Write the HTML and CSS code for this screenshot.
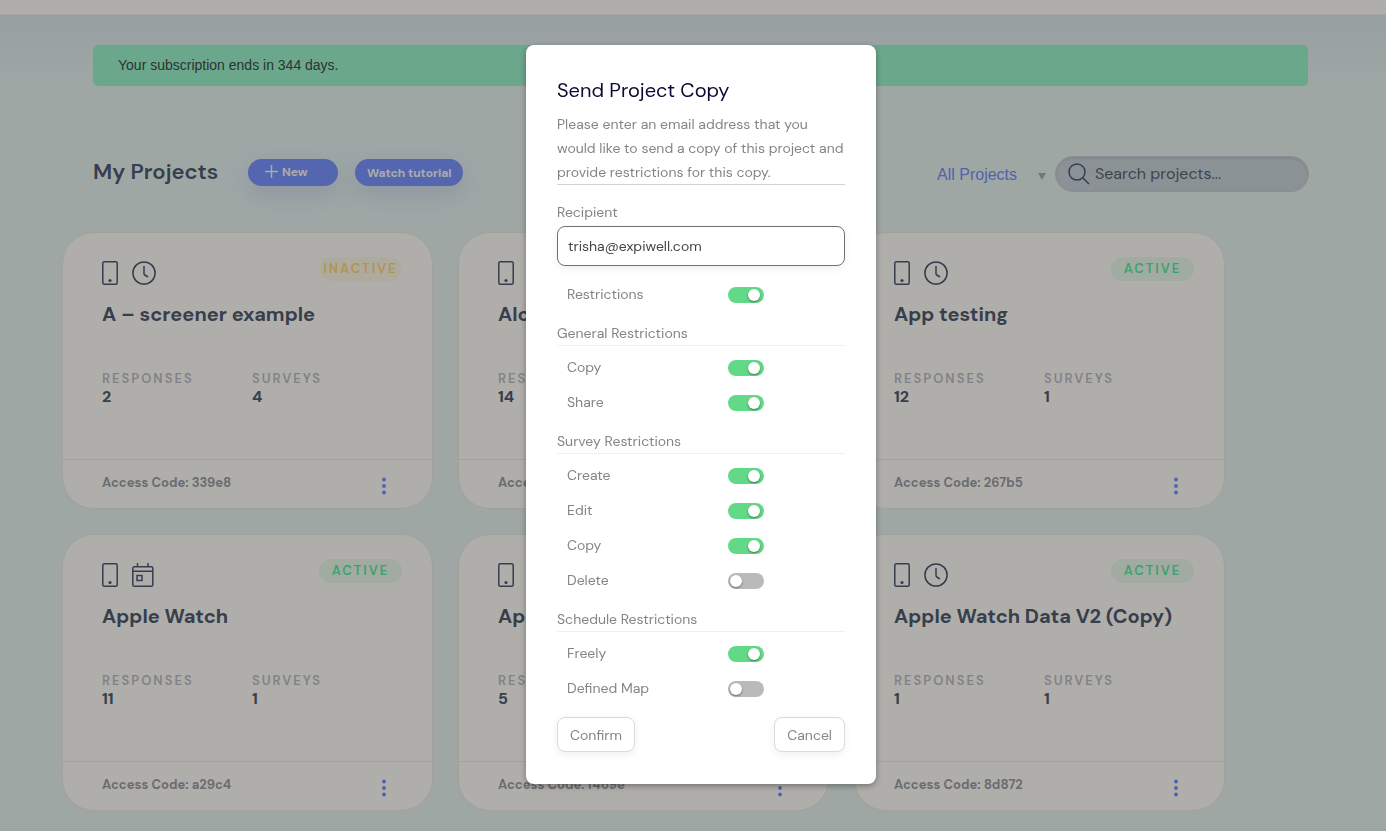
FILE: index.html
```html
<!DOCTYPE html>
<html lang="en">
<head>
<meta charset="utf-8">
<meta name="viewport" content="width=device-width, initial-scale=1">
<title>My Projects</title>
<link rel="stylesheet" href="styles.css">
</head>
<body>
<svg class="sprite" aria-hidden="true">
  <symbol id="phone" viewBox="0 0 16 24"><rect x="0.8" y="0.8" width="14.4" height="22.4" rx="1.5"/><circle class="dot" cx="8" cy="19.5" r="1.6"/></symbol>
  <symbol id="clock" viewBox="0 0 24 24"><circle cx="12" cy="12" r="11.1"/><path d="M12 5v7.5q0 1 .8 1.5l3.2 2"/></symbol>
  <symbol id="calendar" viewBox="0 0 22 24"><rect x="0.8" y="3.8" width="20" height="19.4" rx="1.5"/><path d="M1 8.3h20M5.5 0v4M16 0v4"/><rect x="5" y="12.5" width="5" height="5"/></symbol>
  <symbol id="dots" viewBox="0 0 4 18"><circle cx="2" cy="2.5" r="1.9"/><circle cx="2" cy="9" r="1.9"/><circle cx="2" cy="15.5" r="1.9"/></symbol>
</svg>
<div class="topbar"></div>
<main class="page">
  <p class="notice">Your subscription ends in 344 days.</p>
  <header class="toolbar">
    <h1>My Projects</h1>
    <button class="pill pill-new" type="button"><svg width="13" height="13" viewBox="0 0 13 13" aria-hidden="true"><path d="M6.5 0v13M0 6.5h13"/></svg>New</button>
    <button class="pill" type="button">Watch tutorial</button>
    <div class="filter">
      <select aria-label="Project filter"><option>All Projects</option></select>
      <svg width="8" height="7" viewBox="0 0 8 7" aria-hidden="true"><path d="M0 0h8L4 7z"/></svg>
    </div>
    <label class="search">
      <svg width="22" height="22" viewBox="0 0 22 22" aria-hidden="true"><circle cx="9" cy="9" r="8"/><path d="M15 15l6 6"/></svg>
      <input type="text" placeholder="Search projects..." aria-label="Search projects">
    </label>
  </header>
  <section class="cards">
    <article class="card">
      <div class="card-body">
        <div class="card-top"><svg class="icon" width="16" height="24"><use href="#phone"/></svg><svg class="icon" width="24" height="24"><use href="#clock"/></svg><span class="badge inactive">INACTIVE</span></div>
        <h2>A – screener example</h2>
        <dl><div><dt>RESPONSES</dt><dd>2</dd></div><div><dt>SURVEYS</dt><dd>4</dd></div></dl>
      </div>
      <footer><span>Access Code: 339e8</span><button type="button" aria-label="Project menu"><svg width="4" height="18"><use href="#dots"/></svg></button></footer>
    </article>
    <article class="card">
      <div class="card-body">
        <div class="card-top"><svg class="icon" width="16" height="24"><use href="#phone"/></svg></div>
        <h2>Alc</h2>
        <dl><div><dt>RESPONSES</dt><dd>14</dd></div></dl>
      </div>
      <footer><span>Access</span></footer>
    </article>
    <article class="card">
      <div class="card-body">
        <div class="card-top"><svg class="icon" width="16" height="24"><use href="#phone"/></svg><svg class="icon" width="24" height="24"><use href="#clock"/></svg><span class="badge">ACTIVE</span></div>
        <h2>App testing</h2>
        <dl><div><dt>RESPONSES</dt><dd>12</dd></div><div><dt>SURVEYS</dt><dd>1</dd></div></dl>
      </div>
      <footer><span>Access Code: 267b5</span><button type="button" aria-label="Project menu"><svg width="4" height="18"><use href="#dots"/></svg></button></footer>
    </article>
    <article class="card">
      <div class="card-body">
        <div class="card-top"><svg class="icon" width="16" height="24"><use href="#phone"/></svg><svg class="icon" width="22" height="24"><use href="#calendar"/></svg><span class="badge">ACTIVE</span></div>
        <h2>Apple Watch</h2>
        <dl><div><dt>RESPONSES</dt><dd>11</dd></div><div><dt>SURVEYS</dt><dd>1</dd></div></dl>
      </div>
      <footer><span>Access Code: a29c4</span><button type="button" aria-label="Project menu"><svg width="4" height="18"><use href="#dots"/></svg></button></footer>
    </article>
    <article class="card">
      <div class="card-body">
        <div class="card-top"><svg class="icon" width="16" height="24"><use href="#phone"/></svg></div>
        <h2>Ap</h2>
        <dl><div><dt>RESPONSES</dt><dd>5</dd></div></dl>
      </div>
      <footer><span>Access Code: f469e</span><button type="button" aria-label="Project menu"><svg width="4" height="18"><use href="#dots"/></svg></button></footer>
    </article>
    <article class="card">
      <div class="card-body">
        <div class="card-top"><svg class="icon" width="16" height="24"><use href="#phone"/></svg><svg class="icon" width="24" height="24"><use href="#clock"/></svg><span class="badge">ACTIVE</span></div>
        <h2>Apple Watch Data V2 (Copy)</h2>
        <dl><div><dt>RESPONSES</dt><dd>1</dd></div><div><dt>SURVEYS</dt><dd>1</dd></div></dl>
      </div>
      <footer><span>Access Code: 8d872</span><button type="button" aria-label="Project menu"><svg width="4" height="18"><use href="#dots"/></svg></button></footer>
    </article>
  </section>
</main>
<div class="overlay">
  <form class="modal" role="dialog" aria-labelledby="modal-title">
    <h2 id="modal-title">Send Project Copy</h2>
    <p>Please enter an email address that you would like to send a copy of this project and provide restrictions for this copy.</p>
    <label class="field-label" for="recipient">Recipient</label>
    <input class="field" id="recipient" type="email" value="trisha@expiwell.com">
    <label class="option"><span>Restrictions</span><input type="checkbox" checked></label>
    <h3>General Restrictions</h3>
    <label class="option"><span>Copy</span><input type="checkbox" checked></label>
    <label class="option"><span>Share</span><input type="checkbox" checked></label>
    <h3>Survey Restrictions</h3>
    <label class="option"><span>Create</span><input type="checkbox" checked></label>
    <label class="option"><span>Edit</span><input type="checkbox" checked></label>
    <label class="option"><span>Copy</span><input type="checkbox" checked></label>
    <label class="option"><span>Delete</span><input type="checkbox"></label>
    <h3>Schedule Restrictions</h3>
    <label class="option"><span>Freely</span><input type="checkbox" checked></label>
    <label class="option"><span>Defined Map</span><input type="checkbox"></label>
    <div class="actions"><button type="button">Confirm</button><button type="button">Cancel</button></div>
  </form>
</div>
</body>
</html>
```
FILE: styles.css
```css
* { box-sizing: border-box; }
html { height: 100%; }
body {
  height: 100%;
  margin: 0;
  overflow: hidden;
  background: #e4f0ed;
  color: #4f5a6d;
  font-family: "DM Sans", Inter, "Liberation Sans", sans-serif;
  font-optical-sizing: none;
}
h1, h2, h3, p, dl, dd { margin: 0; }
button, input { font-family: inherit; font-optical-sizing: none; }
button { cursor: pointer; }
.sprite { display: none; }

.topbar { height: 15px; background: #fdfaf4; border-bottom: 1px solid #f0efec; }
.page {
  padding: 30px 0 24px;
  background: linear-gradient(#d9e4e6, #e4f0ed 70px);
}
.notice {
  margin: 0 78px 0 93px;
  padding: 0 25px;
  border-radius: 5px;
  background: #9af0c8;
  color: #40494b;
  font: 14px/41px "Liberation Sans", Arial, sans-serif;
}

.toolbar {
  display: flex;
  align-items: center;
  margin: 69px 77px 40px 93px;
  height: 37px;
}
h1 { width: 155px; padding-bottom: 4px; font-size: 22px; line-height: 28px; font-weight: 600; white-space: nowrap; font-optical-sizing: auto; }
.pill {
  height: 27px;
  padding: 0 12px;
  margin: 0 17px 2px 0;
  border: 0;
  border-radius: 14px;
  background: #7993fd;
  box-shadow: 0 8px 24px rgba(121, 130, 220, 0.25);
  color: #f6f4f2;
  font-size: 12px;
  font-weight: 700;
  font-optical-sizing: auto;
}
.pill-new { display: flex; align-items: center; gap: 4px; width: 90px; padding: 0 0 2px 17px; }
.pill svg { fill: none; stroke: #f6f4f2; stroke-width: 1.5; }
.filter { position: relative; margin-left: auto; width: 118px; }
.filter select {
  width: 100%;
  height: 32px;
  border: 0;
  appearance: none;
  background: transparent;
  color: #768df5;
  font: 16px "Liberation Sans", Arial, sans-serif;
  padding: 2px 0 0;
}
.filter svg { position: absolute; right: 9px; top: 15px; fill: #a9a9aa; }
.search {
  display: flex;
  align-items: center;
  gap: 5px;
  width: 254px;
  height: 36px;
  padding: 0 12px;
  border: 1px solid #cccdd2;
  border-radius: 18px;
  background: #c8d1d6;
  box-shadow: inset 0 1px 3px rgba(110, 110, 130, 0.25);
}
.search svg { flex: none; fill: none; stroke: #4c5a72; stroke-width: 1.5; }
.search input { flex: 1; min-width: 0; padding: 0; border: 0; background: none; font-size: 16px; outline: 0; }
.search input::placeholder { color: #566173; }

.cards {
  display: grid;
  grid-template-columns: repeat(auto-fill, 371px);
  gap: 25px;
  padding-left: 62px;
}
.card {
  border: 1px solid #e8e5e0;
  border-radius: 32px;
  background: #fdfaf4;
}
.card-body { height: 226px; padding: 28px 30px 0 39px; }
.card-top { display: flex; align-items: flex-start; gap: 14px; height: 26px; }
.icon { overflow: visible; fill: none; stroke: #4c5a72; stroke-width: 1.5; }
#phone .dot { fill: #4c5a72; stroke: none; }
.badge {
  width: 83px;
  margin: -4px 0 0 auto;
  border-radius: 12px;
  background: #e8f5e7;
  color: #55e8a0;
  font-size: 13px;
  line-height: 24px;
  font-weight: 600;
  letter-spacing: 2px;
  text-align: center;
}
.badge.inactive { background: #fbf4e2; color: #fbd66f; }
.card h2 { margin-top: 13px; font-size: 20px; line-height: 28px; font-weight: 700; }
.card dl { display: flex; margin-top: 42px; }
.card dl div { width: 150px; }
dt { color: #b9bbc0; font-size: 13px; line-height: 18px; font-weight: 600; letter-spacing: 2px; }
dd { font-size: 16px; line-height: 18px; font-weight: 700; }
.card footer {
  display: flex;
  align-items: flex-start;
  justify-content: space-between;
  height: 49px;
  padding: 13px 42px 0 39px;
  border-top: 1px solid #ebe7ea;
  color: #979ca3;
  font-size: 13px;
  line-height: 20px;
  font-weight: 700;
}
.card footer button { width: 12px; padding: 4px 4px 0; border: 0; background: none; line-height: 0; }
.card footer svg { fill: #728cff; }

.overlay {
  position: fixed;
  inset: 0;
  display: flex;
  justify-content: center;
  align-items: flex-start;
  padding: 45px 0 0 16px;
  background: rgba(0, 0, 0, 0.3);
}
.modal {
  width: 350px;
  padding: 31px 31px 32px;
  border-radius: 8px;
  background: #fff;
  box-shadow: 0 2px 6px rgba(0, 0, 0, 0.35);
  color: #858585;
  font-size: 14px;
}
.modal h2 { color: #0b0b35; font-size: 20px; line-height: 28px; font-weight: 400; }
.modal p { margin-top: 8px; line-height: 24px; border-bottom: 1px solid #d3d3d3; }
.field-label { display: block; margin-top: 15px; padding-bottom: 2px; line-height: 24px; }
.field {
  display: block;
  width: 100%;
  height: 40px;
  margin-bottom: 11px;
  padding: 0 10px;
  border: 1px solid #707070;
  border-radius: 8px;
  box-shadow: 0 3px 8px rgba(0, 0, 0, 0.06);
  color: #444;
  font-size: 14px;
}
.option { display: grid; grid-template-columns: 161px auto; align-items: center; justify-content: start; height: 35px; padding-left: 10px; }
.option span { padding-bottom: 2px; }
.option input {
  appearance: none;
  display: flex;
  width: 36px;
  height: 16px;
  margin: 0;
  padding: 2px;
  border-radius: 8px;
  background: #bababa;
}
.option input::before {
  content: "";
  width: 12px;
  height: 12px;
  border-radius: 50%;
  background: #fff;
  box-shadow: 0 1px 2px rgba(0, 0, 0, 0.45);
}
.option input:checked { background: #62d987; }
.option input:checked::before { margin-left: 18px; }
.modal h3 { margin: 10px 0 4px; border-bottom: 1px solid #f0f0f0; font-size: 14px; line-height: 23px; font-weight: 400; }
.actions { display: flex; justify-content: space-between; margin-top: 11px; }
.actions button {
  height: 35px;
  padding: 0 12px;
  border: 1px solid #dadada;
  border-radius: 8px;
  background: #fff;
  box-shadow: 0 3px 8px rgba(0, 0, 0, 0.06);
  color: #858585;
  font-size: 14px;
}
```
